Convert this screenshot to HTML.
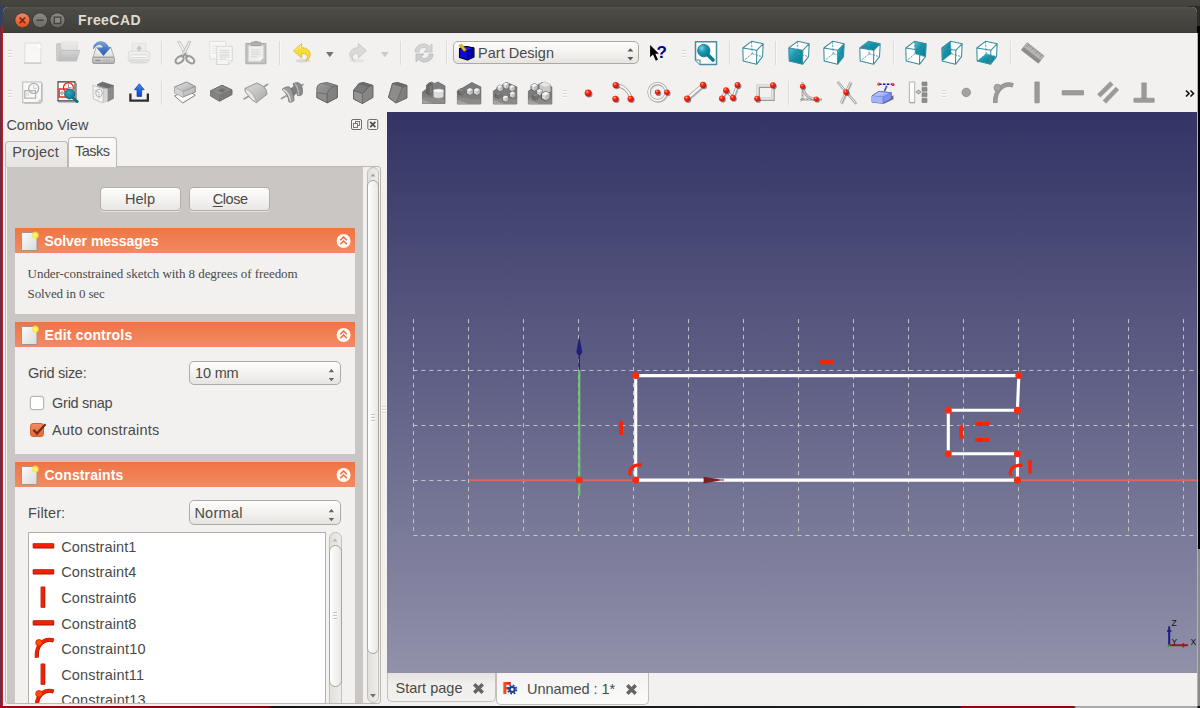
<!DOCTYPE html>
<html><head><meta charset="utf-8"><title>FreeCAD</title>
<style>
*{box-sizing:border-box;margin:0;padding:0}
html,body{width:1200px;height:708px;overflow:hidden;background:#000;font-family:"Liberation Sans",sans-serif;color:#3c3b37}
.abs{position:absolute}
.tx{position:absolute;white-space:pre;line-height:1}
.ic{position:absolute;overflow:visible}
.btn{position:absolute;border:1px solid #b3aea6;border-radius:4px;background:linear-gradient(#fdfdfc,#f4f3f1 50%,#e9e7e4);box-shadow:0 1px 0 rgba(255,255,255,.5)}
.combo{position:absolute;border:1px solid #aea9a1;border-radius:5px;background:linear-gradient(#fdfdfc,#f2f1ef 55%,#e6e4e1)}
.hdr{position:absolute;background:linear-gradient(#ef7443,#f28b65)}
.sep{position:absolute;width:1px;background:#dddbd7;box-shadow:1px 0 0 #f9f8f7}
.hand{position:absolute;width:4px;height:9px;background:repeating-linear-gradient(#d9d7d3 0,#d9d7d3 1px,#fcfcfb 1px,#fcfcfb 2px,transparent 2px,transparent 3px)}
.ul::first-letter{text-decoration:underline;text-underline-offset:2px}
</style></head><body>
<div class="abs" style="left:0px;top:0px;width:1200px;height:708px;background:#000"></div><div class="abs" style="left:0px;top:0px;width:1200px;height:7px;background:linear-gradient(#474640,#42413b)"></div><div class="abs" style="left:0px;top:6px;width:9px;height:30px;background:#384060"></div><div class="abs" style="left:0px;top:6px;width:3px;height:702px;background:linear-gradient(#384060 0,#384060 19px,#6b2c47 20px,#6b2c47 100%)"></div><div class="abs" style="left:2px;top:26px;width:1px;height:682px;background:#b5222c"></div><div class="abs" style="left:1188px;top:6px;width:12px;height:20px;background:#2c2b28"></div><div class="abs" style="left:1197px;top:33px;width:1px;height:673px;background:#b4b2af"></div><div class="abs" style="left:1198px;top:549px;width:2px;height:157px;background:#8b8b8b"></div><div class="abs" style="left:0px;top:706px;width:1200px;height:2px;background:linear-gradient(90deg,#9c0c0c 0,#8a0606 200px,#7a0404 268px,#161616 272px,#1c201e 960px,#8e0a0a 962px,#8e0a0a 1074px,#a9a9a9 1076px,#a9a9a9 1197px,#111 1198px)"></div><div class="abs" style="left:3px;top:7px;width:1194px;height:699px;background:#f2f1f0;border-radius:5px 5px 0 0"></div><div class="abs" style="left:3px;top:7px;width:1194px;height:26px;background:linear-gradient(#57554e 0,#4c4b45 10%,#403f3a 100%);border-radius:5px 5px 0 0;border-bottom:1px solid #3a3934"></div><svg class="ic" style="left:12px;top:10px" width="60" height="21" viewBox="0 0 60 21"><defs><linearGradient id="gwc" x1="0" y1="0" x2="0" y2="1"><stop offset="0" stop-color="#f08763"/><stop offset="1" stop-color="#e24f1b"/></linearGradient><linearGradient id="gwm" x1="0" y1="0" x2="0" y2="1"><stop offset="0" stop-color="#8b8982"/><stop offset="1" stop-color="#6a6862"/></linearGradient></defs><circle cx="10.400" cy="10.300" r="7.800" fill="#35342f"/><circle cx="10.400" cy="10.300" r="7.100" fill="url(#gwc)"/><path d="M7.600 7.500l5.600 5.600M13.200 7.500l-5.600 5.600" stroke="#6a2a12" stroke-width="1.500"/><circle cx="28" cy="10.300" r="7.800" fill="#35342f"/><circle cx="28" cy="10.300" r="7.100" fill="url(#gwm)"/><path d="M24.500 10.300h7" stroke="#43423d" stroke-width="1.500"/><circle cx="45.500" cy="10.300" r="7.800" fill="#35342f"/><circle cx="45.500" cy="10.300" r="7.100" fill="url(#gwm)"/><path d="M42.300 7.100h6.400v6.400h-6.400z" fill="#8a8881" stroke="#43423d" stroke-width="1.300"/></svg><div class="tx" style="left:78px;top:12.75px;font-size:14px;font-weight:bold;color:#dfdbd2;font-family:'Liberation Sans',sans-serif;letter-spacing:0.442px;">FreeCAD</div><svg class="ic" style="left:20.0px;top:41.0px" width="24" height="24" viewBox="0 0 24 24"><defs><linearGradient id="gnew" x1="0" y1="0" x2="1" y2="1"><stop offset="0" stop-color="#f6f6f5"/><stop offset="1" stop-color="#f9f9f8"/></linearGradient><radialGradient id="gnew2"><stop offset="0" stop-color="#fff"/><stop offset=".5" stop-color="#fcfcfc"/><stop offset="1" stop-color="#fcfcfc" stop-opacity="0"/></radialGradient></defs>
<path d="M4.800 1.900h16v20h-16z" fill="url(#gnew)" stroke="#e0dfdd" stroke-width="1"/><path d="M4 22.100h17.600" stroke="#c9c8c6" stroke-width="1.200"/><circle cx="18.800" cy="5.400" r="3" fill="url(#gnew2)"/><circle cx="18.800" cy="5.400" r="3.400" fill="none" stroke="#e4e3e1" stroke-width=".6" opacity=".6"/></svg><svg class="ic" style="left:56.0px;top:41.0px" width="24" height="24" viewBox="0 0 24 24"><defs><linearGradient id="gop" x1="0" y1="0" x2="0" y2="1"><stop offset="0" stop-color="#d4d4d4"/><stop offset="1" stop-color="#bcbcbc"/></linearGradient><linearGradient id="gop2" x1="0" y1="0" x2="0" y2="1"><stop offset="0" stop-color="#f0f0f0"/><stop offset="1" stop-color="#d2d2d2"/></linearGradient></defs>
<path d="M.500 3.500c0-.6.400-1 1-1h4l1.500 2v15h-6.500z" fill="#cbcbcb" stroke="#bdbdbd" stroke-width=".6"/><path d="M5 1.100h16.500v10h-16.500z" fill="url(#gop2)" stroke="#d6d6d6" stroke-width=".6"/><path d="M6.500 2.500l14-.500v8h-14z" fill="#e6e6e6" opacity=".7"/>
<path d="M5.500 9.400h18.300l-3.200 10.100h-18.300z" fill="url(#gop)" stroke="#b6b6b6" stroke-width=".7"/><path d="M1.500 20.300h19" stroke="#c9c9c9" stroke-width=".8"/></svg><svg class="ic" style="left:91.0px;top:41.0px" width="24" height="24" viewBox="0 0 24 24"><defs><linearGradient id="gsv" x1="0" y1="0" x2="0" y2="1"><stop offset="0" stop-color="#f6f6f6"/><stop offset="1" stop-color="#dedede"/></linearGradient><linearGradient id="gsv2" x1="0" y1="0" x2="0" y2="1"><stop offset="0" stop-color="#78a6e0"/><stop offset=".5" stop-color="#467cc4"/><stop offset="1" stop-color="#2a5aa4"/></linearGradient><linearGradient id="gsv3" x1="0" y1="0" x2="0" y2="1"><stop offset="0" stop-color="#d6d6d6"/><stop offset="1" stop-color="#b4b4b4"/></linearGradient></defs>
<path d="M5.200 6.300h14.600l3.200 9.950h-21z" fill="url(#gsv)" stroke="#a8a8a8" stroke-width=".9" stroke-linejoin="round"/><rect x="1.700" y="16.250" width="21.600" height="6.150" rx="1" fill="url(#gsv3)" stroke="#8e8e8e" stroke-width=".9"/><path d="M4.300 19.300h5" stroke="#8f8f8f" stroke-width="1.300"/><path d="M13 17.800v3M15.500 17.800v3M18 17.800v3" stroke="#a6a6a6" stroke-width=".7"/>
<path d="M2.400 7.900C2.600 3.600 5.600 .700 9.400 .700C13.600 .700 16.800 3.200 17.400 6.700L19.600 6.600L12.500 14.600L6.300 7.200L12.300 7C11.900 4.800 10.300 3.600 8.400 3.600C6.200 3.600 4.200 5.200 2.400 7.900Z" fill="url(#gsv2)" stroke="#3467ae" stroke-width=".5" stroke-linejoin="round"/></svg><svg class="ic" style="left:127.0px;top:41.0px" width="24" height="24" viewBox="0 0 24 24"><path d="M5.100 2.250h13.700v9.500h-13.700z" fill="#ececeb" stroke="#dededd" stroke-width=".7"/><path d="M12.100 4.600l3 3.200h-1.800v2.400h-2.400v-2.400h-1.800z" fill="#c4c4c3"/>
<rect x="1.300" y="10.100" width="21.300" height="11.100" rx="2.800" fill="#efefee" stroke="#d6d6d5" stroke-width=".8"/><rect x="3.500" y="13.900" width="17" height="2.600" rx="1.200" fill="#fbfbfb" stroke="#d4d4d3" stroke-width=".8"/><path d="M1.800 18h20.300v.8c0 1.400-.8 2.100-2 2.100h-16.300c-1.200 0-2-.7-2-2.100z" fill="#dfdfde"/><path d="M3.500 21.900h17" stroke="#d6d6d5" stroke-width=".9"/></svg><svg class="ic" style="left:173.0px;top:41.0px" width="24" height="24" viewBox="0 0 24 24"><path d="M4.750 .600h2.400l8.400 15-2.400 1.200z" fill="#f4f4f4" stroke="#b9b9b9" stroke-width=".8" stroke-linejoin="round"/><path d="M17.900 .600h-2.400l-7.200 13.800 2 2.200z" fill="#e9e9e9" stroke="#b2b2b2" stroke-width=".8" stroke-linejoin="round"/>
<ellipse cx="6.600" cy="18.750" rx="4.600" ry="2.900" transform="rotate(-38 6.600 18.750)" fill="none" stroke="#9a9a9a" stroke-width="2.100"/><ellipse cx="17.250" cy="18.750" rx="4.600" ry="2.900" transform="rotate(38 17.250 18.750)" fill="none" stroke="#9a9a9a" stroke-width="2.100"/>
<path d="M9.300 16l2.600-3 2.600 3" fill="none" stroke="#9a9a9a" stroke-width="1.900"/></svg><svg class="ic" style="left:208.5px;top:41.0px" width="24" height="24" viewBox="0 0 24 24"><path d="M.750 .400h16v17.600h-16z" fill="#f7f7f6" stroke="#dddcdb" stroke-width=".9"/><path d="M3 5h6M3 7.300h5M3 9.600h5M3 12h5" stroke="#e4e3e2" stroke-width=".9"/>
<path d="M7.750 5.250h15.500v14.500l-3.800 3.750h-11.700z" fill="#f5f5f4" stroke="#d4d3d2" stroke-width=".9"/><path d="M10.500 9.500h10M10.500 11.700h10M10.500 14h10M10.500 16.200h10M10.500 18.400h7" stroke="#dddcdb" stroke-width="1.300"/><path d="M23.250 19.750h-3.800v3.750z" fill="#fff" stroke="#d0cfce" stroke-width=".7"/></svg><svg class="ic" style="left:244.0px;top:41.0px" width="24" height="24" viewBox="0 0 24 24"><path d="M1.900 2.400h20v20.350h-20z" fill="#c2c2c2" stroke="#aaaaaa" stroke-width="1"/><path d="M4.500 5h15v15.500h-15z" fill="#eeeeed" stroke="#d4d4d3" stroke-width=".7"/>
<path d="M7.500 1.200h9v3.300h-9z" fill="#b0b0b0" stroke="#9c9c9c" stroke-width=".8"/><path d="M9.800 0h4.400v1.800h-4.400z" fill="#a6a6a6"/><path d="M7 9h9M7 11.200h9M7 13.400h9M7 15.600h6" stroke="#dcdcdb" stroke-width="1.200"/><path d="M19.500 16.500v4h-4z" fill="#b9b9b9"/><path d="M19.500 16.500h-4v4z" fill="#fafafa"/></svg><svg class="ic" style="left:289.5px;top:41.0px" width="24" height="24" viewBox="0 0 24 24"><g transform="translate(1.300 .800) scale(.9)"><ellipse cx="13" cy="21" rx="8.500" ry="2" fill="#000" opacity=".10"/>
<path d="M2.500 10l9-8v4.500c6 0 9.500 3.500 9.500 8c0 3-2 5.500-5.500 6.500c2-1.500 2.500-3 2.500-4.500c0-2.500-2.500-3.500-6.500-3.500v5z" fill="#f4dd3c" stroke="#d7b91a" stroke-width=".9" stroke-linejoin="round"/>
<path d="M4 10l6.500-5.800v3.300" fill="none" stroke="#fbf3a8" stroke-width=".9"/></g></svg><svg class="ic" style="left:346.0px;top:41.0px" width="24" height="24" viewBox="0 0 24 24"><g transform="translate(1.100 .800) scale(.9)"><ellipse cx="11" cy="21" rx="8.500" ry="2" fill="#000" opacity=".05"/>
<path d="M21.500 10l-9-8v4.500c-6 0-9.500 3.500-9.500 8c0 3 2 5.500 5.500 6.500c-2-1.500-2.500-3-2.500-4.500c0-2.500 2.500-3.500 6.500-3.500v5z" fill="#d9d9d9" stroke="#c6c6c6" stroke-width=".9" stroke-linejoin="round"/></g></svg><svg class="ic" style="left:412.0px;top:41.0px" width="24" height="24" viewBox="0 0 24 24"><path d="M3 11c0-5 4-8 8.500-8c2.500 0 4.500 1 6 2.500l2.500-2.500v8h-8l3-3c-1-1-2.200-1.500-3.500-1.500c-2.800 0-4.500 2-4.500 4.500z" fill="#d4d4d4" stroke="#bfbfbf" stroke-width=".8"/>
<path d="M21 13c0 5-4 8-8.500 8c-2.500 0-4.500-1-6-2.500l-2.500 2.500v-8h8l-3 3c1 1 2.200 1.500 3.500 1.500c2.800 0 4.500-2 4.500-4.500z" fill="#cdcdcd" stroke="#b9b9b9" stroke-width=".8"/></svg><svg class="ic" style="left:646.0px;top:41.0px" width="24" height="24" viewBox="0 0 24 24"><path d="M4.100 4L4.100 16.200 7 13.400 9.800 19.700 12 18.700 9.300 12.700 12.900 12.700z" fill="#000"/><text x="10.600" y="17.100" font-family="Liberation Sans,sans-serif" font-weight="bold" font-size="17" fill="#00008b">?</text></svg><svg class="ic" style="left:694.0px;top:41.0px" width="24" height="24" viewBox="0 0 24 24"><path d="M1.500 .800h21v22.700h-16.500l-4.500-4.500z" fill="#fdfefe" stroke="#4a8c9a" stroke-width="1.500" stroke-linejoin="round"/><path d="M1.500 19h4.500v4.500" fill="#fff" stroke="#4a8c9a" stroke-width="1.100"/>
<defs><radialGradient id="gzf" cx=".33" cy=".3" r=".75"><stop offset="0" stop-color="#74d4f2"/><stop offset=".45" stop-color="#1a9ab2"/><stop offset="1" stop-color="#077c92"/></radialGradient></defs>
<path d="M14 14l5 5" stroke="#0b7c90" stroke-width="3.700" stroke-linecap="round"/><circle cx="9.800" cy="9.600" r="6.200" fill="url(#gzf)" stroke="#0d7084" stroke-width=".8"/></svg><svg class="ic" style="left:740.5px;top:41.0px" width="24" height="24" viewBox="0 0 24 24"><defs><linearGradient id="gcube" x1="0" y1="0" x2="1" y2="1"><stop offset="0" stop-color="#5cc4e2"/><stop offset=".45" stop-color="#1292aa"/><stop offset="1" stop-color="#078198"/></linearGradient></defs><path d="M1.8 7L10.5 0.3L22.2 2.7L21.5 15.7L15.5 23.3L2.2 20z" fill="#fff"/><path d="M10.5 0.3L11.2 12.7M11.2 12.7L2.2 20M11.2 12.7L21.5 15.7" fill="none" stroke="#4a96a5" stroke-width=".9" stroke-dasharray="2.400 1.100"/><path d="M1.8 7L15.8 9.3L15.5 23.3L2.2 20zM1.8 7L10.5 0.3L22.2 2.7L15.8 9.3M22.2 2.7L21.5 15.7L15.5 23.3" fill="none" stroke="#3a8c9c" stroke-width="1.050" stroke-linejoin="round"/></svg><svg class="ic" style="left:786.5px;top:41.0px" width="24" height="24" viewBox="0 0 24 24"><defs><linearGradient id="gcube" x1="0" y1="0" x2="1" y2="1"><stop offset="0" stop-color="#5cc4e2"/><stop offset=".45" stop-color="#1292aa"/><stop offset="1" stop-color="#078198"/></linearGradient></defs><path d="M1.8 7L10.5 0.3L22.2 2.7L21.5 15.7L15.5 23.3L2.2 20z" fill="#fff"/><path d="M1.8 7L15.8 9.3L15.5 23.3L2.2 20z" fill="url(#gcube)"/><path d="M10.5 0.3L11.2 12.7M11.2 12.7L2.2 20M11.2 12.7L21.5 15.7" fill="none" stroke="#4a96a5" stroke-width=".9" stroke-dasharray="2.400 1.100"/><path d="M1.8 7L15.8 9.3L15.5 23.3L2.2 20zM1.8 7L10.5 0.3L22.2 2.7L15.8 9.3M22.2 2.7L21.5 15.7L15.5 23.3" fill="none" stroke="#3a8c9c" stroke-width="1.050" stroke-linejoin="round"/></svg><svg class="ic" style="left:822.0px;top:41.0px" width="24" height="24" viewBox="0 0 24 24"><defs><linearGradient id="gcube" x1="0" y1="0" x2="1" y2="1"><stop offset="0" stop-color="#5cc4e2"/><stop offset=".45" stop-color="#1292aa"/><stop offset="1" stop-color="#078198"/></linearGradient></defs><path d="M1.8 7L10.5 0.3L22.2 2.7L21.5 15.7L15.5 23.3L2.2 20z" fill="#fff"/><path d="M15.8 9.3L22.2 2.7L21.5 15.7L15.5 23.3z" fill="url(#gcube)"/><path d="M10.5 0.3L11.2 12.7M11.2 12.7L2.2 20M11.2 12.7L21.5 15.7" fill="none" stroke="#4a96a5" stroke-width=".9" stroke-dasharray="2.400 1.100"/><path d="M1.8 7L15.8 9.3L15.5 23.3L2.2 20zM1.8 7L10.5 0.3L22.2 2.7L15.8 9.3M22.2 2.7L21.5 15.7L15.5 23.3" fill="none" stroke="#3a8c9c" stroke-width="1.050" stroke-linejoin="round"/></svg><svg class="ic" style="left:857.5px;top:41.0px" width="24" height="24" viewBox="0 0 24 24"><defs><linearGradient id="gcube" x1="0" y1="0" x2="1" y2="1"><stop offset="0" stop-color="#5cc4e2"/><stop offset=".45" stop-color="#1292aa"/><stop offset="1" stop-color="#078198"/></linearGradient></defs><path d="M1.8 7L10.5 0.3L22.2 2.7L21.5 15.7L15.5 23.3L2.2 20z" fill="#fff"/><path d="M1.8 7L10.5 0.3L22.2 2.7L15.8 9.3z" fill="url(#gcube)"/><path d="M10.5 0.3L11.2 12.7M11.2 12.7L2.2 20M11.2 12.7L21.5 15.7" fill="none" stroke="#4a96a5" stroke-width=".9" stroke-dasharray="2.400 1.100"/><path d="M1.8 7L15.8 9.3L15.5 23.3L2.2 20zM1.8 7L10.5 0.3L22.2 2.7L15.8 9.3M22.2 2.7L21.5 15.7L15.5 23.3" fill="none" stroke="#3a8c9c" stroke-width="1.050" stroke-linejoin="round"/></svg><svg class="ic" style="left:903.5px;top:41.0px" width="24" height="24" viewBox="0 0 24 24"><defs><linearGradient id="gcube" x1="0" y1="0" x2="1" y2="1"><stop offset="0" stop-color="#5cc4e2"/><stop offset=".45" stop-color="#1292aa"/><stop offset="1" stop-color="#078198"/></linearGradient></defs><path d="M1.8 7L10.5 0.3L22.2 2.7L21.5 15.7L15.5 23.3L2.2 20z" fill="#fff"/><path d="M10.5 0.3L22.2 2.7L21.5 15.7L11.2 12.7z" fill="url(#gcube)"/><path d="M10.5 0.3L11.2 12.7M11.2 12.7L2.2 20M11.2 12.7L21.5 15.7" fill="none" stroke="#4a96a5" stroke-width=".9" stroke-dasharray="2.400 1.100"/><path d="M1.8 7L15.8 9.3L15.5 23.3L2.2 20zM1.8 7L10.5 0.3L22.2 2.7L15.8 9.3M22.2 2.7L21.5 15.7L15.5 23.3" fill="none" stroke="#3a8c9c" stroke-width="1.050" stroke-linejoin="round"/></svg><svg class="ic" style="left:939.5px;top:41.0px" width="24" height="24" viewBox="0 0 24 24"><defs><linearGradient id="gcube" x1="0" y1="0" x2="1" y2="1"><stop offset="0" stop-color="#5cc4e2"/><stop offset=".45" stop-color="#1292aa"/><stop offset="1" stop-color="#078198"/></linearGradient></defs><path d="M1.8 7L10.5 0.3L22.2 2.7L21.5 15.7L15.5 23.3L2.2 20z" fill="#fff"/><path d="M1.8 7L10.5 0.3L11.2 12.7L2.2 20z" fill="url(#gcube)"/><path d="M10.5 0.3L11.2 12.7M11.2 12.7L2.2 20M11.2 12.7L21.5 15.7" fill="none" stroke="#4a96a5" stroke-width=".9" stroke-dasharray="2.400 1.100"/><path d="M1.8 7L15.8 9.3L15.5 23.3L2.2 20zM1.8 7L10.5 0.3L22.2 2.7L15.8 9.3M22.2 2.7L21.5 15.7L15.5 23.3" fill="none" stroke="#3a8c9c" stroke-width="1.050" stroke-linejoin="round"/></svg><svg class="ic" style="left:974.5px;top:41.0px" width="24" height="24" viewBox="0 0 24 24"><defs><linearGradient id="gcube" x1="0" y1="0" x2="1" y2="1"><stop offset="0" stop-color="#5cc4e2"/><stop offset=".45" stop-color="#1292aa"/><stop offset="1" stop-color="#078198"/></linearGradient></defs><path d="M1.8 7L10.5 0.3L22.2 2.7L21.5 15.7L15.5 23.3L2.2 20z" fill="#fff"/><path d="M2.2 20L11.2 12.7L21.5 15.7L15.5 23.3z" fill="url(#gcube)"/><path d="M10.5 0.3L11.2 12.7M11.2 12.7L2.2 20M11.2 12.7L21.5 15.7" fill="none" stroke="#4a96a5" stroke-width=".9" stroke-dasharray="2.400 1.100"/><path d="M1.8 7L15.8 9.3L15.5 23.3L2.2 20zM1.8 7L10.5 0.3L22.2 2.7L15.8 9.3M22.2 2.7L21.5 15.7L15.5 23.3" fill="none" stroke="#3a8c9c" stroke-width="1.050" stroke-linejoin="round"/></svg><svg class="ic" style="left:1021.0px;top:41.0px" width="24" height="24" viewBox="0 0 24 24"><g transform="rotate(38 12 12)"><path d="M1 7.500h21.500v6h-21.500z" fill="#b4b4b4" stroke="#9a9a9a" stroke-width=".8"/><path d="M1 13.500h21.500v3.300h-21.500z" fill="#8c8c8c" stroke="#858585" stroke-width=".6"/><path d="M3.500 7.500v3M6.200 7.500v2M9 7.500v3M11.700 7.500v2M14.500 7.500v3M17.200 7.500v2M20 7.500v3" stroke="#858585" stroke-width=".9"/></g></svg><svg class="ic" style="left:20.0px;top:81.0px" width="24" height="24" viewBox="0 0 24 24"><path d="M4.200 2.500h18.800v17.800l-2.500 2.700h-16.300z" fill="#bcbcbc" opacity=".75"/><path d="M2.700 1h18.800v18.100l-2.500 2.500h-16.300z" fill="#f8f8f8" stroke="#bdbdbd" stroke-width="1.100"/><path d="M19 21.600v-2.500h2.500" fill="none" stroke="#bdbdbd" stroke-width=".8"/>
<circle cx="13.700" cy="7.400" r="5" fill="none" stroke="#adadad" stroke-width="1.250"/><path d="M4.800 9.700h10.800v7.300h-10.800z" fill="none" stroke="#b4b4b4" stroke-width="1.250"/><path d="M13.700 4v3.400h3.300" fill="none" stroke="#c2c2c2" stroke-width=".8"/><circle cx="7.500" cy="13.300" r="1.300" fill="none" stroke="#c4c4c4" stroke-width=".7"/></svg><svg class="ic" style="left:56.0px;top:81.0px" width="24" height="24" viewBox="0 0 24 24"><path d="M2 .900h17v19h-17z" fill="#fff" stroke="#3a3a3a" stroke-width="1.100"/><path d="M2.500 21h17.800v-19" fill="none" stroke="#8a8a8a" stroke-width="1"/>
<circle cx="12.400" cy="6.750" r="5" fill="none" stroke="#ee2a1a" stroke-width="1.300"/><path d="M3.200 8h8.500v8h-8.500z" fill="none" stroke="#ee2a1a" stroke-width="1.300"/><path d="M12.400 3.200v3.500h3" fill="none" stroke="#555" stroke-width=".7"/><circle cx="6" cy="12" r="1.300" fill="none" stroke="#555" stroke-width=".7"/>
<defs><radialGradient id="gvs" cx=".4" cy=".35" r=".7"><stop offset="0" stop-color="#35a8bd"/><stop offset="1" stop-color="#087388"/></radialGradient></defs>
<path d="M17 17l4.300 3.600" stroke="#0d7488" stroke-width="2.800" stroke-linecap="round"/><circle cx="13.600" cy="13" r="5" fill="url(#gvs)" stroke="#0a6678" stroke-width=".8"/></svg><svg class="ic" style="left:91.0px;top:81.0px" width="24" height="24" viewBox="0 0 24 24"><path d="M6 3.700L16.600 7.400V20.700L6 17z" fill="#9c9c9c"/><path d="M16.600 7.400L22.500 4.600V17.500L16.600 20.700z" fill="#8a8a8a" stroke="#7a7a7a" stroke-width=".6"/><path d="M6 3.700L11.500 1 22.500 4.600 16.600 7.400z" fill="#6e6e6e" stroke="#666" stroke-width=".6"/>
<path d="M12.400 7.800l4.200-.4v13.300l-4.600 1.300z" fill="#d4d4d4"/>
<path d="M1.900 4.200l10.500 3.600-.4 14.200-9.600-4.100z" fill="#f5f5f5" stroke="#bebebe" stroke-width=".9" stroke-linejoin="round"/><ellipse cx="8" cy="12" rx="3.300" ry="3.900" fill="none" stroke="#b0b0b0" stroke-width="1"/><path d="M3.500 9.500l4.500 1.600v7" fill="none" stroke="#bcbcbc" stroke-width=".9"/></svg><svg class="ic" style="left:127.0px;top:81.0px" width="24" height="24" viewBox="0 0 24 24"><path d="M3.400 12.400v7.200h17.450v-7.200" fill="none" stroke="#2e2e2e" stroke-width="2.300" stroke-linejoin="miter"/>
<defs><linearGradient id="gls" x1="0" y1="0" x2="0" y2="1"><stop offset="0" stop-color="#3a86f4"/><stop offset="1" stop-color="#0a49c8"/></linearGradient></defs>
<path d="M12.300 2.800l4.900 5.900h-2.600v6.800h-4.600v-6.800h-2.600z" fill="url(#gls)" stroke="#0d3ea6" stroke-width=".7" stroke-linejoin="round"/></svg><svg class="ic" style="left:173.0px;top:81.0px" width="24" height="24" viewBox="0 0 24 24"><path d="M1.600 14.900L9.750 22 22.250 14.250 14 9z" fill="#fdfdfd" stroke="#7d7d7d" stroke-width="1"/>
<defs><linearGradient id="gpad" x1="0" y1="0" x2="1" y2="1"><stop offset="0" stop-color="#e4e4e4"/><stop offset="1" stop-color="#aaaaaa"/></linearGradient></defs>
<path d="M1.600 6.100L13.500 1.100 22.250 5.500v5.600L9.750 16.100 1.600 11.700z" fill="#c2c2c2" stroke="#858585" stroke-width=".9" stroke-linejoin="round"/><path d="M1.600 6.100L13.500 1.100 22.250 5.500 9.750 10.500z" fill="url(#gpad)" stroke="#8a8a8a" stroke-width=".7"/><path d="M9.750 10.500v5.600" stroke="#8a8a8a" stroke-width=".8"/><path d="M1.600 6.100l8.150 4.400v5.600l-8.150-4.400z" fill="#d2d2d2"/></svg><svg class="ic" style="left:208.5px;top:81.0px" width="24" height="24" viewBox="0 0 24 24"><path d="M1.500 9.900L13 4.250 23 9v4.600L10.500 20.250 1.500 14.900z" fill="#7b7b7b" stroke="#646464" stroke-width=".9" stroke-linejoin="round"/><path d="M1.500 9.900L13 4.250 23 9 10.500 14.500z" fill="#8b8b8b" stroke="#686868" stroke-width=".7"/><path d="M10.500 14.500v5.750" stroke="#646464" stroke-width=".8"/><path d="M1.500 9.900l9 4.600v5.750l-9-5.350z" fill="#848484"/>
<path d="M8.500 9.300l4.500-2.300 4.500 2-4.500 2.400z" fill="#757575"/><path d="M10.500 9.300l4.800.2-2.300 1.600z" fill="#686868"/></svg><svg class="ic" style="left:244.0px;top:81.0px" width="24" height="24" viewBox="0 0 24 24"><path d="M.300 17.800L5.600 14.700" stroke="#9c9c9c" stroke-width="1.900" stroke-linecap="round"/><path d="M20.300 5.500L23.400 3.500" stroke="#9c9c9c" stroke-width="1.900" stroke-linecap="round"/>
<defs><linearGradient id="grev" x1="0" y1="0" x2="1" y2="1"><stop offset="0" stop-color="#dcdcdc"/><stop offset=".5" stop-color="#c4c4c4"/><stop offset="1" stop-color="#a4a4a4"/></linearGradient></defs>
<path d="M1 7.400L13 1.900 18.900 5.100C21.500 7 22.800 10 23 13.300L12.500 21.600 7.500 18.400 1.500 11z" fill="url(#grev)" stroke="#8c8c8c" stroke-width=".9" stroke-linejoin="round"/>
<path d="M1 7.400C6 8.800 11.100 14.700 12.500 21.600L7.500 18.400 1.500 11z" fill="#e6e6e6" stroke="#9a9a9a" stroke-width=".8" stroke-linejoin="round"/></svg><svg class="ic" style="left:279.5px;top:81.0px" width="24" height="24" viewBox="0 0 24 24"><path d="M1.500 17.500L6 15" stroke="#9a9a9a" stroke-width="1.700" stroke-linecap="round"/><path d="M19.500 5.500L23 3.500" stroke="#9a9a9a" stroke-width="1.700" stroke-linecap="round"/>
<path d="M13 3c2.500-2 5.500-1.500 7.500 0c2 3 2.500 7 1.500 10.500c-1.500 1-3 1.500-4.500 1c-1-3.500-2-7-4.500-11.500z" fill="#8a8a8a" stroke="#6f6f6f" stroke-width=".8"/><path d="M15 2.500c2 2.500 3.500 7 3.500 11.500" fill="none" stroke="#bdbdbd" stroke-width="1.200"/>
<path d="M9 9.500c2-2.500 4-4.500 6-5c1 2.500 1.500 5 1.500 8c-2 1.500-3.500 3.500-4.500 6z" fill="#7f7f7f"/>
<path d="M2 8.500c2-2 5-3 7.500-2.500c3 3.500 4.500 8.500 4.500 13.500c-1.500 1.500-3.500 2-5 1.500c-.5-5-3-9.500-7-12.500z" fill="#9c9c9c" stroke="#6f6f6f" stroke-width=".8"/><path d="M3 8.500c4 2 7 7 7.500 12" fill="none" stroke="#d9d9d9" stroke-width="1.400"/></svg><svg class="ic" style="left:315.0px;top:81.0px" width="24" height="24" viewBox="0 0 24 24"><defs><linearGradient id="gfil" x1="0" y1="0" x2="1" y2="1"><stop offset="0" stop-color="#9a9a9a"/><stop offset="1" stop-color="#787878"/></linearGradient></defs>
<path d="M1.900 6.900C2.500 3.500 5 2.500 7.600 2.300L11.700 1.400 22.250 4.600V16.600L12.200 21.800 1.900 16.600z" fill="url(#gfil)" stroke="#606060" stroke-width=".9" stroke-linejoin="round"/>
<path d="M1.900 11.500l10.300 1.800v8.500L1.900 16.600z" fill="#8e8e8e" stroke="#606060" stroke-width=".7"/><path d="M12.200 13.300C13 8 17 5.500 22.250 4.600V16.600L12.200 21.800z" fill="#818181" stroke="#606060" stroke-width=".7"/><path d="M7.600 2.300L18 5.600" stroke="#6a6a6a" stroke-width=".7"/><path d="M1.900 11.500C2.500 7 5 4 9 2.800" fill="none" stroke="#a8a8a8" stroke-width=".6" opacity=".6"/></svg><svg class="ic" style="left:350.5px;top:81.0px" width="24" height="24" viewBox="0 0 24 24"><path d="M2.500 9.500L8 2.500l4.500-1 9.500 3v12L11.500 22.500 2.500 18z" fill="#858585" stroke="#5f5f5f" stroke-width=".9" stroke-linejoin="round"/>
<path d="M2.500 9.500L8 2.500l10 3-6.500 7z" fill="#7a7a7a" stroke="#5f5f5f" stroke-width=".7"/><path d="M8 2.500l4.500-1 9.500 3-4 1z" fill="#6f6f6f" stroke="#5f5f5f" stroke-width=".6"/><path d="M2.500 9.500l9 3v10l-9-4.500z" fill="#939393" stroke="#5f5f5f" stroke-width=".7"/><path d="M11.500 12.500L18 5.500" stroke="#5f5f5f" stroke-width=".8"/></svg><svg class="ic" style="left:386.0px;top:81.0px" width="24" height="24" viewBox="0 0 24 24"><path d="M2.500 16.500L6.500 2.500l5-1 9.500 3v12.500L10 22z" fill="#7f7f7f" stroke="#5f5f5f" stroke-width=".9" stroke-linejoin="round"/>
<path d="M6.500 2.500l5-1 9.500 3-4.500 1.500z" fill="#6d6d6d" stroke="#5f5f5f" stroke-width=".6"/><path d="M2.500 16.500L6.500 2.500l10 3.500L10 22z" fill="#8c8c8c" stroke="#5f5f5f" stroke-width=".7"/></svg><svg class="ic" style="left:421.5px;top:81.0px" width="24" height="24" viewBox="0 0 24 24"><g transform="translate(-1 0)"><path d="M1.500 11l6-4.500v-4l3-1.500 3 1.500L17 1l7 4v17.500h-22.500z" fill="#7e7e7e" stroke="#686868" stroke-width=".8" stroke-linejoin="round"/>
<path d="M1.500 11l6-3 7 4-5 4z" fill="#747474"/><path d="M1.500 16l22 2v4.500h-22z" fill="#8c8c8c"/><path d="M1.500 18.500l10 4h-10z" fill="#a2a2a2"/>
<path d="M5.500 4l3-2 3 1.500v8l-3 2-3-1.500z" fill="#666" stroke="#555" stroke-width=".6"/><path d="M8.500 5.500l3-2v8l-3 2z" fill="#777"/>
<path d="M12.500 10c0-2.200 10-2.200 10 0v5.500c0 2.200-10 2.200-10 0z" fill="#dcdcdc" stroke="#a5a5a5" stroke-width=".6"/><ellipse cx="17.500" cy="10" rx="5" ry="1.900" fill="#f7f7f7" stroke="#c2c2c2" stroke-width=".5"/></g></svg><svg class="ic" style="left:457.0px;top:81.0px" width="24" height="24" viewBox="0 0 24 24"><path d="M.400 10.100L14.8 1.600l9 4.300V23H.400z" fill="#7c7c7c" stroke="#676767" stroke-width=".8" stroke-linejoin="round"/><path d="M.400 16.500l23.400 2V23H.400z" fill="#8a8a8a"/><path d="M.400 18.800l11 4.200h-11z" fill="#a2a2a2"/><g transform="translate(1.0 7.5) scale(1.0)"><path d="M0 1.800L3 0l3 1.300v3.700L3 6.800 0 5.300z" fill="#6c6c6c" stroke="#5c5c5c" stroke-width=".8" stroke-linejoin="round"/><path d="M0 1.800L3 0l3 1.300L3 3.100z" fill="#8a8a8a"/><path d="M3 3.100l3-1.800v3.700L3 6.800z" fill="#777"/></g><g transform="translate(9.5 7) scale(1.05)"><path d="M0 1.800L3 0l3 1.300v3.700L3 6.800 0 5.300z" fill="#d6d6d6" stroke="#5c5c5c" stroke-width=".8" stroke-linejoin="round"/><path d="M0 1.800L3 0l3 1.300L3 3.100z" fill="#f2f2f2"/><path d="M3 3.100l3-1.800v3.700L3 6.800z" fill="#bdbdbd"/></g><g transform="translate(16.5 7) scale(1.05)"><path d="M0 1.800L3 0l3 1.300v3.700L3 6.800 0 5.300z" fill="#d6d6d6" stroke="#5c5c5c" stroke-width=".8" stroke-linejoin="round"/><path d="M0 1.800L3 0l3 1.300L3 3.100z" fill="#f2f2f2"/><path d="M3 3.100l3-1.800v3.700L3 6.800z" fill="#bdbdbd"/></g></svg><svg class="ic" style="left:492.5px;top:81.0px" width="24" height="24" viewBox="0 0 24 24"><path d="M.400 10.100L13.8 1.600l10 4.300V23H.400z" fill="#7c7c7c" stroke="#676767" stroke-width=".8" stroke-linejoin="round"/><path d="M.400 16.500l23.400 2V23H.400z" fill="#8a8a8a"/><path d="M.400 18.800l11 4.200h-11z" fill="#a2a2a2"/><g transform="translate(4.0 4) scale(0.95)"><path d="M0 1.800L3 0l3 1.300v3.700L3 6.800 0 5.300z" fill="#d6d6d6" stroke="#5c5c5c" stroke-width=".8" stroke-linejoin="round"/><path d="M0 1.800L3 0l3 1.300L3 3.100z" fill="#f2f2f2"/><path d="M3 3.100l3-1.800v3.700L3 6.800z" fill="#bdbdbd"/></g><g transform="translate(10.0 1.5) scale(0.95)"><path d="M0 1.800L3 0l3 1.300v3.700L3 6.800 0 5.300z" fill="#d6d6d6" stroke="#5c5c5c" stroke-width=".8" stroke-linejoin="round"/><path d="M0 1.800L3 0l3 1.300L3 3.100z" fill="#f2f2f2"/><path d="M3 3.100l3-1.800v3.700L3 6.800z" fill="#bdbdbd"/></g><g transform="translate(16.0 4) scale(0.95)"><path d="M0 1.800L3 0l3 1.300v3.700L3 6.800 0 5.300z" fill="#d6d6d6" stroke="#5c5c5c" stroke-width=".8" stroke-linejoin="round"/><path d="M0 1.800L3 0l3 1.300L3 3.100z" fill="#f2f2f2"/><path d="M3 3.100l3-1.800v3.700L3 6.800z" fill="#bdbdbd"/></g><g transform="translate(2.5 11) scale(0.95)"><path d="M0 1.800L3 0l3 1.300v3.700L3 6.800 0 5.300z" fill="#6c6c6c" stroke="#5c5c5c" stroke-width=".8" stroke-linejoin="round"/><path d="M0 1.800L3 0l3 1.300L3 3.100z" fill="#8a8a8a"/><path d="M3 3.100l3-1.800v3.700L3 6.800z" fill="#777"/></g><g transform="translate(16.5 10.5) scale(0.95)"><path d="M0 1.800L3 0l3 1.300v3.700L3 6.800 0 5.300z" fill="#d6d6d6" stroke="#5c5c5c" stroke-width=".8" stroke-linejoin="round"/><path d="M0 1.800L3 0l3 1.300L3 3.100z" fill="#f2f2f2"/><path d="M3 3.100l3-1.800v3.700L3 6.800z" fill="#bdbdbd"/></g><g transform="translate(9.5 14.5) scale(0.95)"><path d="M0 1.800L3 0l3 1.300v3.700L3 6.800 0 5.300z" fill="#d6d6d6" stroke="#5c5c5c" stroke-width=".8" stroke-linejoin="round"/><path d="M0 1.800L3 0l3 1.300L3 3.100z" fill="#f2f2f2"/><path d="M3 3.100l3-1.800v3.700L3 6.800z" fill="#bdbdbd"/></g></svg><svg class="ic" style="left:528.0px;top:81.0px" width="24" height="24" viewBox="0 0 24 24"><path d="M.400 10.100L13.8 1.600l10 4.300V23H.400z" fill="#7c7c7c" stroke="#676767" stroke-width=".8" stroke-linejoin="round"/><path d="M.400 16.500l23.400 2V23H.400z" fill="#8a8a8a"/><path d="M.400 18.800l11 4.200h-11z" fill="#a2a2a2"/><path d="M11.500 3.500l5-2.500 6 2.500v7l-5 3-6-2.500z" fill="#c9c9c9" stroke="#9c9c9c" stroke-width=".6"/><path d="M11.500 3.500l5-2.500 6 2.500-5 2.500z" fill="#e6e6e6"/><g transform="translate(3.0 2.5) scale(1.1)"><path d="M0 1.800L3 0l3 1.300v3.700L3 6.800 0 5.300z" fill="#d6d6d6" stroke="#5c5c5c" stroke-width=".8" stroke-linejoin="round"/><path d="M0 1.800L3 0l3 1.300L3 3.100z" fill="#f2f2f2"/><path d="M3 3.100l3-1.800v3.700L3 6.800z" fill="#bdbdbd"/></g><g transform="translate(8.5 8) scale(1.0)"><path d="M0 1.800L3 0l3 1.300v3.700L3 6.800 0 5.300z" fill="#d6d6d6" stroke="#5c5c5c" stroke-width=".8" stroke-linejoin="round"/><path d="M0 1.800L3 0l3 1.300L3 3.100z" fill="#f2f2f2"/><path d="M3 3.100l3-1.800v3.700L3 6.800z" fill="#bdbdbd"/></g><g transform="translate(13.5 10.5) scale(1.35)"><path d="M0 1.800L3 0l3 1.300v3.700L3 6.800 0 5.300z" fill="#d6d6d6" stroke="#5c5c5c" stroke-width=".8" stroke-linejoin="round"/><path d="M0 1.800L3 0l3 1.300L3 3.100z" fill="#f2f2f2"/><path d="M3 3.100l3-1.800v3.700L3 6.800z" fill="#bdbdbd"/></g><g transform="translate(4.5 12.5) scale(1.0)"><path d="M0 1.800L3 0l3 1.300v3.700L3 6.800 0 5.300z" fill="#6c6c6c" stroke="#5c5c5c" stroke-width=".8" stroke-linejoin="round"/><path d="M0 1.800L3 0l3 1.300L3 3.100z" fill="#8a8a8a"/><path d="M3 3.100l3-1.800v3.700L3 6.800z" fill="#777"/></g></svg><svg class="ic" style="left:576.0px;top:81.0px" width="24" height="24" viewBox="0 0 24 24"><defs><radialGradient id="gball" cx=".38" cy=".32" r=".75"><stop offset="0" stop-color="#ffc4b8"/><stop offset=".3" stop-color="#ff2e16"/><stop offset="1" stop-color="#c80800"/></radialGradient></defs><circle cx="13.20" cy="13.30" r="3.30" fill="#4a4a4a" opacity=".6"/><circle cx="12.10" cy="12.00" r="3.40" fill="url(#gball)"/></svg><svg class="ic" style="left:611.0px;top:81.0px" width="24" height="24" viewBox="0 0 24 24"><defs><radialGradient id="gball" cx=".38" cy=".32" r=".75"><stop offset="0" stop-color="#ffc4b8"/><stop offset=".3" stop-color="#ff2e16"/><stop offset="1" stop-color="#c80800"/></radialGradient></defs><path d="M4.600 4C12 4.500 18.500 10 19.600 17.750" fill="none" stroke="#666" stroke-width="3.0" opacity=".45" transform="translate(.9 1.100)"/><path d="M4.600 4C12 4.500 18.500 10 19.600 17.750" fill="none" stroke="#a2a2a2" stroke-width="3.4"/><path d="M4.600 4C12 4.500 18.500 10 19.600 17.750" fill="none" stroke="#f6f6f6" stroke-width="1.9"/><circle cx="5.70" cy="5.30" r="3.00" fill="#4a4a4a" opacity=".6"/><circle cx="4.60" cy="4.00" r="3.10" fill="url(#gball)"/><circle cx="5.50" cy="19.05" r="3.00" fill="#4a4a4a" opacity=".6"/><circle cx="4.40" cy="17.75" r="3.10" fill="url(#gball)"/><circle cx="20.70" cy="19.05" r="3.00" fill="#4a4a4a" opacity=".6"/><circle cx="19.60" cy="17.75" r="3.10" fill="url(#gball)"/></svg><svg class="ic" style="left:647.0px;top:81.0px" width="24" height="24" viewBox="0 0 24 24"><defs><radialGradient id="gball" cx=".38" cy=".32" r=".75"><stop offset="0" stop-color="#ffc4b8"/><stop offset=".3" stop-color="#ff2e16"/><stop offset="1" stop-color="#c80800"/></radialGradient></defs><circle cx="11.200" cy="12" r="8.600" fill="none" stroke="#666" stroke-width="2.600" opacity=".4"/><circle cx="10.500" cy="11.100" r="8.600" fill="none" stroke="#a2a2a2" stroke-width="3.200"/><circle cx="10.500" cy="11.100" r="8.600" fill="none" stroke="#f8f8f8" stroke-width="1.700"/><circle cx="11.60" cy="12.40" r="2.60" fill="#4a4a4a" opacity=".6"/><circle cx="10.50" cy="11.10" r="2.70" fill="url(#gball)"/><circle cx="21.00" cy="12.60" r="2.60" fill="#4a4a4a" opacity=".6"/><circle cx="19.90" cy="11.30" r="2.70" fill="url(#gball)"/></svg><svg class="ic" style="left:682.5px;top:81.0px" width="24" height="24" viewBox="0 0 24 24"><defs><radialGradient id="gball" cx=".38" cy=".32" r=".75"><stop offset="0" stop-color="#ffc4b8"/><stop offset=".3" stop-color="#ff2e16"/><stop offset="1" stop-color="#c80800"/></radialGradient></defs><path d="M4.100 17.600L20 3.900" fill="none" stroke="#666" stroke-width="3.4" opacity=".45" transform="translate(.9 1.100)"/><path d="M4.100 17.600L20 3.900" fill="none" stroke="#a2a2a2" stroke-width="3.8"/><path d="M4.100 17.600L20 3.900" fill="none" stroke="#f6f6f6" stroke-width="2.3"/><circle cx="5.20" cy="18.90" r="3.00" fill="#4a4a4a" opacity=".6"/><circle cx="4.10" cy="17.60" r="3.10" fill="url(#gball)"/><circle cx="21.10" cy="5.20" r="3.00" fill="#4a4a4a" opacity=".6"/><circle cx="20.00" cy="3.90" r="3.10" fill="url(#gball)"/></svg><svg class="ic" style="left:718.0px;top:81.0px" width="24" height="24" viewBox="0 0 24 24"><defs><radialGradient id="gball" cx=".38" cy=".32" r=".75"><stop offset="0" stop-color="#ffc4b8"/><stop offset=".3" stop-color="#ff2e16"/><stop offset="1" stop-color="#c80800"/></radialGradient></defs><path d="M3.900 17.400L8 9.250L14.900 16.750L19.500 3.900" fill="none" stroke="#666" stroke-width="2.6" opacity=".45" transform="translate(.9 1.100)"/><path d="M3.900 17.400L8 9.250L14.900 16.750L19.500 3.900" fill="none" stroke="#a2a2a2" stroke-width="3"/><path d="M3.900 17.400L8 9.250L14.900 16.750L19.500 3.900" fill="none" stroke="#f6f6f6" stroke-width="1.5"/><circle cx="5.00" cy="18.70" r="2.80" fill="#4a4a4a" opacity=".6"/><circle cx="3.90" cy="17.40" r="2.90" fill="url(#gball)"/><circle cx="9.10" cy="10.55" r="2.80" fill="#4a4a4a" opacity=".6"/><circle cx="8.00" cy="9.25" r="2.90" fill="url(#gball)"/><circle cx="16.00" cy="18.05" r="2.80" fill="#4a4a4a" opacity=".6"/><circle cx="14.90" cy="16.75" r="2.90" fill="url(#gball)"/><circle cx="20.60" cy="5.20" r="2.80" fill="#4a4a4a" opacity=".6"/><circle cx="19.50" cy="3.90" r="2.90" fill="url(#gball)"/></svg><svg class="ic" style="left:753.0px;top:81.0px" width="24" height="24" viewBox="0 0 24 24"><defs><radialGradient id="gball" cx=".38" cy=".32" r=".75"><stop offset="0" stop-color="#ffc4b8"/><stop offset=".3" stop-color="#ff2e16"/><stop offset="1" stop-color="#c80800"/></radialGradient></defs><path d="M5.500 5.700h14.800v13.100h-14.800z" fill="none" stroke="#666" stroke-width="2.600" opacity=".75"/><path d="M4.600 4.700h14.800v13h-14.800z" fill="none" stroke="#cfcfcf" stroke-width="2.900"/><path d="M4.600 4.700h14.800v13h-14.800z" fill="none" stroke="#e4e4e4" stroke-width="1.200"/><circle cx="5.20" cy="18.90" r="2.80" fill="#4a4a4a" opacity=".6"/><circle cx="4.10" cy="17.60" r="2.90" fill="url(#gball)"/><circle cx="21.00" cy="5.55" r="2.80" fill="#4a4a4a" opacity=".6"/><circle cx="19.90" cy="4.25" r="2.90" fill="url(#gball)"/></svg><svg class="ic" style="left:799.0px;top:81.0px" width="24" height="24" viewBox="0 0 24 24"><defs><radialGradient id="gball" cx=".38" cy=".32" r=".75"><stop offset="0" stop-color="#ffc4b8"/><stop offset=".3" stop-color="#ff2e16"/><stop offset="1" stop-color="#c80800"/></radialGradient></defs><path d="M3.500 1v17.500M2 18.500h21" fill="none" stroke="#9a9a9a" stroke-width="1.800"/><path d="M3.500 1v17.500M2 18.500h21" fill="none" stroke="#efefef" stroke-width=".6" stroke-dasharray="2 1.500"/><path d="M3.500 5.250C4.500 13 9 17.500 17.250 18" fill="none" stroke="#666" stroke-width="1.8000000000000003" opacity=".45" transform="translate(.9 1.100)"/><path d="M3.500 5.250C4.500 13 9 17.500 17.250 18" fill="none" stroke="#a2a2a2" stroke-width="2.2"/><path d="M3.500 5.250C4.500 13 9 17.500 17.250 18" fill="none" stroke="#f6f6f6" stroke-width="0.7000000000000002"/><path d="M3.500 18.500l-2 2M3.500 18.500h-2.500" stroke="#9a9a9a" stroke-width="1"/><circle cx="4.60" cy="6.55" r="2.50" fill="#4a4a4a" opacity=".6"/><circle cx="3.50" cy="5.25" r="2.60" fill="url(#gball)"/><circle cx="18.35" cy="19.30" r="2.50" fill="#4a4a4a" opacity=".6"/><circle cx="17.25" cy="18.00" r="2.60" fill="url(#gball)"/></svg><svg class="ic" style="left:835.0px;top:81.0px" width="24" height="24" viewBox="0 0 24 24"><defs><radialGradient id="gball" cx=".38" cy=".32" r=".75"><stop offset="0" stop-color="#ffc4b8"/><stop offset=".3" stop-color="#ff2e16"/><stop offset="1" stop-color="#c80800"/></radialGradient></defs><path d="M2.500 .750L20.600 22" fill="none" stroke="#666" stroke-width="2.0" opacity=".45" transform="translate(.9 1.100)"/><path d="M2.500 .750L20.600 22" fill="none" stroke="#a2a2a2" stroke-width="2.4"/><path d="M2.500 .750L20.600 22" fill="none" stroke="#f6f6f6" stroke-width="0.8999999999999999"/><path d="M15.600 1L6 22" fill="none" stroke="#666" stroke-width="2.0" opacity=".45" transform="translate(.9 1.100)"/><path d="M15.600 1L6 22" fill="none" stroke="#a2a2a2" stroke-width="2.4"/><path d="M15.600 1L6 22" fill="none" stroke="#f6f6f6" stroke-width="0.8999999999999999"/><circle cx="12.10" cy="12.40" r="2.70" fill="#4a4a4a" opacity=".6"/><circle cx="11.00" cy="11.10" r="2.80" fill="url(#gball)"/></svg><svg class="ic" style="left:871.0px;top:81.0px" width="24" height="24" viewBox="0 0 24 24"><defs><radialGradient id="gball" cx=".38" cy=".32" r=".75"><stop offset="0" stop-color="#ffc4b8"/><stop offset=".3" stop-color="#ff2e16"/><stop offset="1" stop-color="#c80800"/></radialGradient></defs><defs><linearGradient id="gext" x1="0" y1="0" x2="1" y2="1"><stop offset="0" stop-color="#d4defc"/><stop offset="1" stop-color="#7f93ee"/></linearGradient></defs>
<path d="M13 22.800l9.500-4.500v-4l-9.500 5z" fill="#3a3a3a" opacity=".7"/>
<path d="M1 14.900L7.750 10.500l12.500 1.250v6.250L12.100 22.400 1 21.100z" fill="#7f93ee" stroke="#4a58cc" stroke-width=".9" stroke-linejoin="round"/><path d="M1 14.900L7.750 10.500l12.500 1.250L12.100 16.100z" fill="url(#gext)" stroke="#5a6cd8" stroke-width=".7"/><path d="M1 14.900l11.100 1.200v6.300L1 21.100z" fill="#a3b4f6"/><path d="M12.100 16.100v6.300" stroke="#5a6cd8" stroke-width=".7"/>
<path d="M15.250 6.300L13.400 10.200" stroke="#2c3ea8" stroke-width="1.500"/><path d="M14 5.800l2.600.6-.6-2z" fill="#2c3ea8"/>
<path d="M8 3.250h14" stroke="#1010b0" stroke-width="1.700" stroke-dasharray="2.600 1.300"/><circle cx="7.75" cy="3.00" r="1.50" fill="url(#gball)"/><circle cx="22.00" cy="3.60" r="1.50" fill="url(#gball)"/></svg><svg class="ic" style="left:906.0px;top:81.0px" width="24" height="24" viewBox="0 0 24 24"><path d="M3.400 1h5.300v20.500h-5.300z" fill="#fdfdfd" stroke="#a9a9a9" stroke-width=".9"/><path d="M3.800 21.800h5.300" stroke="#9a9a9a" stroke-width=".8"/>
<path d="M16 1h5v3.800h-5zM16 6.300h5v4h-5zM16 11.800h5v4h-5zM16 17.300h5v4.200h-5z" fill="#8c8c8c" stroke="#7c7c7c" stroke-width=".6"/>
<path d="M9.500 11l3-2.600v5.200zM15.500 11l-3-2.600v5.200z" fill="#8a8a8a"/><circle cx="12.500" cy="11" r="1.600" fill="#bdbdbd"/></svg><svg class="ic" style="left:954.0px;top:81.0px" width="24" height="24" viewBox="0 0 24 24"><circle cx="12.250" cy="11.400" r="4.200" fill="#a2a2a2" stroke="#8a8a8a" stroke-width=".9"/></svg><svg class="ic" style="left:990.0px;top:81.0px" width="24" height="24" viewBox="0 0 24 24"><path d="M23 4.300C14 1.500 4.800 8 5.300 22" fill="none" stroke="#8a8a8a" stroke-width="4.500"/><path d="M23 4.300C14 1.500 4.800 8 5.300 22" fill="none" stroke="#9b9b9b" stroke-width="3.500"/><circle cx="7.500" cy="6.750" r="3.500" fill="#a6a6a6" stroke="#8a8a8a" stroke-width=".8"/></svg><svg class="ic" style="left:1025.0px;top:81.0px" width="24" height="24" viewBox="0 0 24 24"><path d="M9.900 1h4.300v20.800h-4.300z" fill="#9b9b9b" stroke="#8a8a8a" stroke-width=".8"/></svg><svg class="ic" style="left:1061.0px;top:81.0px" width="24" height="24" viewBox="0 0 24 24"><path d="M1.200 9.700h21.300v4.200h-21.300z" fill="#9b9b9b" stroke="#8a8a8a" stroke-width=".8"/></svg><svg class="ic" style="left:1096.0px;top:81.0px" width="24" height="24" viewBox="0 0 24 24"><path d="M2.750 14.900L15.900 2" stroke="#9b9b9b" stroke-width="4.600"/><path d="M8.400 21L21.500 7.400" stroke="#9b9b9b" stroke-width="4.600"/></svg><svg class="ic" style="left:1132.0px;top:81.0px" width="24" height="24" viewBox="0 0 24 24"><path d="M9.800 1.900h4.500v15.500h-4.500z" fill="#9b9b9b" stroke="#8a8a8a" stroke-width=".6"/><path d="M1.900 17.200h20.300v4.100h-20.300z" fill="#9b9b9b" stroke="#8a8a8a" stroke-width=".6"/></svg><div class="sep" style="left:161px;top:41px;height:24px"></div><div class="sep" style="left:279px;top:41px;height:24px"></div><div class="sep" style="left:400px;top:41px;height:24px"></div><div class="sep" style="left:446px;top:41px;height:24px"></div><div class="sep" style="left:729px;top:41px;height:24px"></div><div class="sep" style="left:775px;top:41px;height:24px"></div><div class="sep" style="left:893px;top:41px;height:24px"></div><div class="sep" style="left:1010px;top:41px;height:24px"></div><div class="sep" style="left:161px;top:81px;height:24px"></div><div class="sep" style="left:788px;top:81px;height:24px"></div><div class="hand" style="left:8px;top:50px"></div><div class="hand" style="left:682px;top:50px"></div><div class="hand" style="left:8px;top:90px"></div><div class="hand" style="left:563px;top:90px"></div><div class="hand" style="left:942px;top:90px"></div><svg class="ic" style="left:326.300px;top:52.300px" width="9" height="6"><path d="M0 0h7.600l-3.800 5.300z" fill="#76736e"/></svg><svg class="ic" style="left:381.300px;top:52.300px" width="9" height="6"><path d="M0 0h7.600l-3.800 5.300z" fill="#cbc9c5"/></svg><div class="combo" style="left:453px;top:41px;width:186px;height:23px"></div><svg class="ic" style="left:458px;top:44px" width="18" height="17" viewBox="0 0 18 17"><path d="M1.500 4.500L8 2.500 16 4v9L9.500 16 1.500 13.500z" fill="#0a0ad8" stroke="#000" stroke-width="1.100" stroke-linejoin="round"/><path d="M1.500 4.500L8 2.500 16 4 9.500 6.500z" fill="#2222f2" stroke="#000" stroke-width=".8"/><path d="M9.500 6.500V16" stroke="#000" stroke-width=".9"/><path d="M9.500 6.500L16 4v9l-6.500 3z" fill="#0000a8"/><path d="M1 1.500l2.500-1.500 5 6-2.500 1.500z" fill="#e8b830" stroke="#a07800" stroke-width=".5"/></svg><div class="tx" style="left:478px;top:45.93px;font-size:14.5px;font-weight:normal;color:#4a4a48;font-family:'Liberation Sans',sans-serif;letter-spacing:0.021px;">Part Design</div><svg class="ic" style="left:626.800px;top:46px" width="8" height="14"><path d="M.400 5.600h6l-3-3.400zM.400 11h6l-3 3.400z" fill="#5a5854"/></svg><svg class="ic" style="left:1185px;top:90px" width="10" height="7" viewBox="0 0 10 7"><path d="M1 .500l3 3-3 3M5.500 .500l3 3-3 3" fill="none" stroke="#111" stroke-width="1.600"/></svg><div class="tx" style="left:6.4px;top:117.73px;font-size:14.5px;font-weight:normal;color:#4a4a48;font-family:'Liberation Sans',sans-serif;letter-spacing:0.005px;">Combo View</div><svg class="ic" style="left:350px;top:118px" width="30" height="13" viewBox="0 0 30 13"><rect x="1.500" y="1.500" width="10" height="10" rx="1.500" fill="#f6f5f4" stroke="#6e6c68" stroke-width="1"/><rect x="5.500" y="3.500" width="4" height="4" fill="none" stroke="#6e6c68" stroke-width=".9"/><rect x="3.500" y="5.500" width="4" height="4" fill="#f6f5f4" stroke="#6e6c68" stroke-width=".9"/><rect x="17.800" y="1.500" width="10" height="10" rx="1.500" fill="#f6f5f4" stroke="#6e6c68" stroke-width="1"/><path d="M20.200 3.900l5.200 5.200M25.400 3.900l-5.200 5.200" stroke="#504e4a" stroke-width="1.700"/></svg><div class="abs" style="left:5px;top:165.5px;width:376px;height:538px;border:1px solid #bdb8b1;border-radius:3px;background:#f2f1f0"></div><div class="abs" style="left:6.5px;top:167px;width:356.2px;height:535.5px;background:#c9c6c3"></div><div class="abs" style="left:5px;top:140.5px;width:63px;height:26px;border:1px solid #bdb8b1;border-bottom:none;border-radius:4px 4px 0 0;background:linear-gradient(#f0efed,#e6e4e1)"></div><div class="abs" style="left:67.5px;top:137px;width:49.5px;height:30px;border:1px solid #bdb8b1;border-bottom:none;border-radius:4px 4px 0 0;background:linear-gradient(#fbfbfa,#f4f3f2)"></div><div class="tx" style="left:12.2px;top:145.03px;font-size:14.5px;font-weight:normal;color:#4a4a48;font-family:'Liberation Sans',sans-serif;letter-spacing:0.237px;">Project</div><div class="tx" style="left:75px;top:144.33px;font-size:14.5px;font-weight:normal;color:#4a4a48;font-family:'Liberation Sans',sans-serif;letter-spacing:-0.496px;">Tasks</div><div class="btn" style="left:100px;top:187px;width:80.500px;height:23.500px"></div><div class="btn" style="left:189.400px;top:187px;width:81px;height:23.500px"></div><div class="tx" style="left:125px;top:192.03px;font-size:14.5px;font-weight:normal;color:#4a4a48;font-family:'Liberation Sans',sans-serif;letter-spacing:0.043px;">Help</div><div class="tx ul" style="left:212.7px;top:192.03px;font-size:14.5px;font-weight:normal;color:#4a4a48;font-family:'Liberation Sans',sans-serif;letter-spacing:-0.416px;text-decoration:none">Close</div><div class="hdr" style="left:15px;top:228.4px;width:340px;height:24.500px"></div><svg class="ic" style="left:20px;top:229.9px" width="20" height="22" viewBox="0 0 20 22"><defs><linearGradient id="gdoc" x1="0" y1="0" x2="1" y2="1"><stop offset="0" stop-color="#fcfcfc"/><stop offset="1" stop-color="#d9d9d9"/></linearGradient><radialGradient id="gsun"><stop offset="0" stop-color="#fff89a"/><stop offset=".6" stop-color="#ffe83a"/><stop offset="1" stop-color="#ffe83a" stop-opacity="0"/></radialGradient></defs><path d="M1.500 2.500h15.500v18h-15.500z" fill="url(#gdoc)" stroke="#9a8f88" stroke-width=".9"/><circle cx="15.300" cy="5.200" r="4.200" fill="url(#gsun)"/></svg><div class="tx" style="left:44.4px;top:234.35px;font-size:14px;font-weight:bold;color:#ffffff;font-family:'Liberation Sans',sans-serif;letter-spacing:-0.027px;">Solver messages</div><svg class="ic" style="left:336px;top:232.9px" width="16" height="16" viewBox="0 0 16 16"><circle cx="7.600" cy="8" r="7" fill="#fdf6f2"/><path d="M4.300 7.300L7.600 4l3.300 3.300M4.300 11.300L7.600 8l3.300 3.300" fill="none" stroke="#e8703f" stroke-width="1.500"/></svg><div class="abs" style="left:15px;top:252.9px;width:340px;height:60.7px;background:#f2f1f0"></div><div class="tx" style="left:27.6px;top:266.61px;font-size:13px;font-weight:normal;color:#4a4a48;font-family:'Liberation Serif',serif;letter-spacing:-0.053px;">Under-constrained sketch with 8 degrees of freedom</div><div class="tx" style="left:27.6px;top:287.01px;font-size:13px;font-weight:normal;color:#4a4a48;font-family:'Liberation Serif',serif;letter-spacing:-0.139px;">Solved in 0 sec</div><div class="hdr" style="left:15px;top:322px;width:340px;height:24.500px"></div><svg class="ic" style="left:20px;top:323.5px" width="20" height="22" viewBox="0 0 20 22"><defs><linearGradient id="gdoc" x1="0" y1="0" x2="1" y2="1"><stop offset="0" stop-color="#fcfcfc"/><stop offset="1" stop-color="#d9d9d9"/></linearGradient><radialGradient id="gsun"><stop offset="0" stop-color="#fff89a"/><stop offset=".6" stop-color="#ffe83a"/><stop offset="1" stop-color="#ffe83a" stop-opacity="0"/></radialGradient></defs><path d="M1.500 2.500h15.500v18h-15.500z" fill="url(#gdoc)" stroke="#9a8f88" stroke-width=".9"/><circle cx="15.300" cy="5.200" r="4.200" fill="url(#gsun)"/></svg><div class="tx" style="left:44.4px;top:327.95px;font-size:14px;font-weight:bold;color:#ffffff;font-family:'Liberation Sans',sans-serif;letter-spacing:0.188px;">Edit controls</div><svg class="ic" style="left:336px;top:326.5px" width="16" height="16" viewBox="0 0 16 16"><circle cx="7.600" cy="8" r="7" fill="#fdf6f2"/><path d="M4.300 7.300L7.600 4l3.300 3.300M4.300 11.300L7.600 8l3.300 3.300" fill="none" stroke="#e8703f" stroke-width="1.500"/></svg><div class="abs" style="left:15px;top:346.5px;width:340px;height:107.1px;background:#f2f1f0"></div><div class="tx" style="left:28px;top:366.03px;font-size:14.5px;font-weight:normal;color:#4a4a48;font-family:'Liberation Sans',sans-serif;letter-spacing:-0.285px;">Grid size:</div><div class="combo" style="left:189.300px;top:360.500px;width:151.400px;height:24.300px"></div><div class="tx" style="left:195px;top:366.03px;font-size:14.5px;font-weight:normal;color:#4a4a48;font-family:'Liberation Sans',sans-serif;letter-spacing:-0.166px;">10 mm</div><svg class="ic" style="left:328px;top:367px" width="8" height="15"><path d="M.700 5.200h5.400l-2.700-3.200zM.700 11h5.400l-2.700 3.200z" fill="#66645f"/></svg><div class="abs" style="left:30.2px;top:396px;width:14.2px;height:14px;border:1px solid #b9b4ad;border-radius:3px;background:#fff;box-shadow:0 0 0 .5px #dcd9d5"></div><div class="tx" style="left:52.1px;top:396.03px;font-size:14.5px;font-weight:normal;color:#4a4a48;font-family:'Liberation Sans',sans-serif;letter-spacing:-0.286px;">Grid snap</div><div class="abs" style="left:30.2px;top:423.3px;width:14.2px;height:14px;border:1px solid #cf6336;border-radius:3px;background:linear-gradient(#f38b62,#ea6832)"></div><svg class="ic" style="left:30px;top:422px" width="16" height="16" viewBox="0 0 16 16"><path d="M3.300 7.800l3.700 3.800 8.500-9.400" fill="none" stroke="#6a3019" stroke-width="2.200"/></svg><div class="tx" style="left:52.1px;top:423.03px;font-size:14.5px;font-weight:normal;color:#4a4a48;font-family:'Liberation Sans',sans-serif;letter-spacing:0.207px;">Auto constraints</div><div class="hdr" style="left:15px;top:462px;width:340px;height:24.500px"></div><svg class="ic" style="left:20px;top:463.5px" width="20" height="22" viewBox="0 0 20 22"><defs><linearGradient id="gdoc" x1="0" y1="0" x2="1" y2="1"><stop offset="0" stop-color="#fcfcfc"/><stop offset="1" stop-color="#d9d9d9"/></linearGradient><radialGradient id="gsun"><stop offset="0" stop-color="#fff89a"/><stop offset=".6" stop-color="#ffe83a"/><stop offset="1" stop-color="#ffe83a" stop-opacity="0"/></radialGradient></defs><path d="M1.500 2.500h15.500v18h-15.500z" fill="url(#gdoc)" stroke="#9a8f88" stroke-width=".9"/><circle cx="15.300" cy="5.200" r="4.200" fill="url(#gsun)"/></svg><div class="tx" style="left:44.4px;top:467.95px;font-size:14px;font-weight:bold;color:#ffffff;font-family:'Liberation Sans',sans-serif;letter-spacing:0.109px;">Constraints</div><svg class="ic" style="left:336px;top:466.5px" width="16" height="16" viewBox="0 0 16 16"><circle cx="7.600" cy="8" r="7" fill="#fdf6f2"/><path d="M4.300 7.300L7.600 4l3.300 3.300M4.300 11.300L7.600 8l3.300 3.300" fill="none" stroke="#e8703f" stroke-width="1.500"/></svg><div class="abs" style="left:15px;top:486.5px;width:340px;height:216px;background:#f2f1f0"></div><div class="tx" style="left:28px;top:506.03px;font-size:14.5px;font-weight:normal;color:#4a4a48;font-family:'Liberation Sans',sans-serif;letter-spacing:0.15px;">Filter:</div><div class="combo" style="left:189.300px;top:500.400px;width:151.400px;height:24.300px"></div><div class="tx" style="left:194.4px;top:506.03px;font-size:14.5px;font-weight:normal;color:#4a4a48;font-family:'Liberation Sans',sans-serif;letter-spacing:0.261px;">Normal</div><svg class="ic" style="left:328px;top:507px" width="8" height="15"><path d="M.700 5.200h5.400l-2.700-3.200zM.700 11h5.400l-2.700 3.200z" fill="#66645f"/></svg><div class="abs" style="left:27.6px;top:532px;width:298.4px;height:171px;border:1px solid #b3aea6;border-bottom:none;background:#fff"></div><div class="abs" style="left:28px;top:533px;width:297px;height:169.500px;overflow:hidden"><svg class="ic" style="left:4px;top:9.200000000000045px" width="24" height="8" viewBox="0 0 24 8"><rect x=".700" y="1.300" width="21.500" height="5.200" rx="1" fill="#a41600"/><rect x="1.200" y="1.800" width="20.500" height="3.600" rx=".6" fill="#f22200"/></svg><div class="tx" style="left:33.2px;top:6.73px;font-size:14.5px;font-weight:normal;color:#4a4a48;font-family:'Liberation Sans',sans-serif;letter-spacing:0.104px;">Constraint1</div><svg class="ic" style="left:4px;top:34.80000000000007px" width="24" height="8" viewBox="0 0 24 8"><rect x=".700" y="1.300" width="21.500" height="5.200" rx="1" fill="#a41600"/><rect x="1.200" y="1.800" width="20.500" height="3.600" rx=".6" fill="#f22200"/></svg><div class="tx" style="left:33.2px;top:32.33px;font-size:14.5px;font-weight:normal;color:#4a4a48;font-family:'Liberation Sans',sans-serif;letter-spacing:0.104px;">Constraint4</div><svg class="ic" style="left:12px;top:52.90000000000009px" width="8" height="23" viewBox="0 0 8 23"><rect x=".600" y=".500" width="4.700" height="21.300" rx=".9" fill="#a41600"/><rect x="1" y=".900" width="3.500" height="20.300" rx=".6" fill="#f22200"/></svg><div class="tx" style="left:33.2px;top:57.93px;font-size:14.5px;font-weight:normal;color:#4a4a48;font-family:'Liberation Sans',sans-serif;letter-spacing:0.104px;">Constraint6</div><svg class="ic" style="left:4px;top:86.0px" width="24" height="8" viewBox="0 0 24 8"><rect x=".700" y="1.300" width="21.500" height="5.200" rx="1" fill="#a41600"/><rect x="1.200" y="1.800" width="20.500" height="3.600" rx=".6" fill="#f22200"/></svg><div class="tx" style="left:33.2px;top:83.53px;font-size:14.5px;font-weight:normal;color:#4a4a48;font-family:'Liberation Sans',sans-serif;letter-spacing:0.104px;">Constraint8</div><svg class="ic" style="left:4px;top:104.10000000000002px" width="24" height="24" viewBox="0 0 24 24"><path d="M21.700 3.600C13 .500 4 7 4.800 20.600" fill="none" stroke="#a81600" stroke-width="4.100"/><path d="M21.500 3.300C12.800 .200 3.800 6.700 4.600 20.300" fill="none" stroke="#f22000" stroke-width="3.100"/><circle cx="7" cy="5.800" r="3.300" fill="#ff4c00" stroke="#d42400" stroke-width=".8"/></svg><div class="tx" style="left:33.2px;top:109.13px;font-size:14.5px;font-weight:normal;color:#4a4a48;font-family:'Liberation Sans',sans-serif;letter-spacing:0.19px;">Constraint10</div><svg class="ic" style="left:12px;top:129.70000000000005px" width="8" height="23" viewBox="0 0 8 23"><rect x=".600" y=".500" width="4.700" height="21.300" rx=".9" fill="#a41600"/><rect x="1" y=".900" width="3.500" height="20.300" rx=".6" fill="#f22200"/></svg><div class="tx" style="left:33.2px;top:134.73px;font-size:14.5px;font-weight:normal;color:#4a4a48;font-family:'Liberation Sans',sans-serif;letter-spacing:0.155px;">Constraint11</div><svg class="ic" style="left:4px;top:155.30000000000007px" width="24" height="24" viewBox="0 0 24 24"><path d="M21.700 3.600C13 .500 4 7 4.800 20.600" fill="none" stroke="#a81600" stroke-width="4.100"/><path d="M21.500 3.300C12.800 .200 3.800 6.700 4.600 20.300" fill="none" stroke="#f22000" stroke-width="3.100"/><circle cx="7" cy="5.800" r="3.300" fill="#ff4c00" stroke="#d42400" stroke-width=".8"/></svg><div class="tx" style="left:33.2px;top:160.33px;font-size:14.5px;font-weight:normal;color:#4a4a48;font-family:'Liberation Sans',sans-serif;letter-spacing:0.19px;">Constraint13</div></div><div class="abs" style="left:0;top:0;width:1200px;height:702.5px;overflow:hidden"><div class="abs" style="left:329px;top:532px;width:12.5px;height:190px;border:1px solid #c4bfb8;border-radius:6.25px;background:linear-gradient(90deg,#e2e0dd,#eeedeb)"></div><div class="abs" style="left:329px;top:544.5px;width:12.5px;height:142.5px;border:1px solid #aaa49c;border-radius:6.25px;background:linear-gradient(90deg,#fefefe,#e9e8e6)"></div><svg class="ic" style="left:332.25px;top:538px" width="6" height="4"><path d="M.500 3.500h5l-2.500-3z" fill="#bab6b0"/></svg><div class="abs" style="left:333.25px;top:612px;width:4px;height:1px;background:#c6c3be;box-shadow:0 1px 0 #fbfbfa"></div><div class="abs" style="left:333.25px;top:615px;width:4px;height:1px;background:#c6c3be;box-shadow:0 1px 0 #fbfbfa"></div><div class="abs" style="left:333.25px;top:618px;width:4px;height:1px;background:#c6c3be;box-shadow:0 1px 0 #fbfbfa"></div></div><div class="abs" style="left:366.5px;top:167px;width:12.5px;height:535.5px;border:1px solid #c4bfb8;border-radius:6.25px;background:linear-gradient(90deg,#e2e0dd,#eeedeb)"></div><div class="abs" style="left:366.5px;top:180px;width:12.5px;height:473.5px;border:1px solid #aaa49c;border-radius:6.25px;background:linear-gradient(90deg,#fefefe,#e9e8e6)"></div><svg class="ic" style="left:369.75px;top:173px" width="6" height="4"><path d="M.500 3.500h5l-2.500-3z" fill="#a9a59f"/></svg><div class="abs" style="left:370.75px;top:413.5px;width:4px;height:1px;background:#c6c3be;box-shadow:0 1px 0 #fbfbfa"></div><div class="abs" style="left:370.75px;top:416.5px;width:4px;height:1px;background:#c6c3be;box-shadow:0 1px 0 #fbfbfa"></div><div class="abs" style="left:370.75px;top:419.5px;width:4px;height:1px;background:#c6c3be;box-shadow:0 1px 0 #fbfbfa"></div><svg class="ic" style="left:369.700px;top:693.500px" width="7" height="4"><path d="M0 0h6l-3 3.600z" fill="#75726d"/></svg><div class="abs" style="left:382.3px;top:405.7px;width:3.7px;height:1px;background:#d6d4d0;box-shadow:0 1px 0 #fbfbfa"></div><div class="abs" style="left:382.3px;top:408.7px;width:3.7px;height:1px;background:#d6d4d0;box-shadow:0 1px 0 #fbfbfa"></div><div class="abs" style="left:382.3px;top:411.7px;width:3.7px;height:1px;background:#d6d4d0;box-shadow:0 1px 0 #fbfbfa"></div><svg class="ic" style="left:387px;top:112px;overflow:hidden" width="810" height="561" viewBox="0 0 810 561"><defs><linearGradient id="gbg" x1="0" y1="0" x2="0" y2="1"><stop offset="0" stop-color="#333365"/><stop offset="1" stop-color="#9191aa"/></linearGradient></defs><style>.gr{stroke:#cdccca;stroke-width:1;stroke-dasharray:4.100 3.900;fill:none;opacity:.9}</style><rect width="810" height="561" fill="url(#gbg)"/><path d="M26.5 207.10000000000002V423" class="gr"/><path d="M81.5 207.10000000000002V423" class="gr"/><path d="M136.5 207.10000000000002V423" class="gr"/><path d="M191.5 207.10000000000002V423" class="gr"/><path d="M246.5 207.10000000000002V423" class="gr"/><path d="M301.5 207.10000000000002V423" class="gr"/><path d="M356.5 207.10000000000002V423" class="gr"/><path d="M411.5 207.10000000000002V423" class="gr"/><path d="M466.5 207.10000000000002V423" class="gr"/><path d="M521.5 207.10000000000002V423" class="gr"/><path d="M576.5 207.10000000000002V423" class="gr"/><path d="M631.5 207.10000000000002V423" class="gr"/><path d="M686.5 207.10000000000002V423" class="gr"/><path d="M741.5 207.10000000000002V423" class="gr"/><path d="M796.5 207.10000000000002V423" class="gr"/><path d="M26.30000000000001 258.5H810" class="gr"/><path d="M26.30000000000001 313.5H810" class="gr"/><path d="M26.30000000000001 368.5H810" class="gr"/><path d="M26.30000000000001 423.5H810" class="gr"/><path d="M82 368.3H810" stroke="#dc6462" stroke-width="2.100"/><path d="M192.29999999999995 258V383.5" stroke="#62cf6a" stroke-width="2"/><path d="M192.29999999999995 223.8l3 16.500l-2.300 3.500v14h-1.400v-14l-2.300-3.500z" fill="#20207c"/><path d="M248.7 263.6L631.8 263.6L630.4 298.2L561.3 298.2L561.3 341.7L630.4 341.7L630.4 368.1L248.7 368.1z" fill="none" stroke="#ffffff" stroke-width="3.100" stroke-linejoin="round"/><path d="M316.6 364.8l17 2.800h3.400v1h-3.400l-17 2.800z" fill="#782222"/><circle cx="248.7" cy="263.6" r="3.500" fill="#ff2a0c"/><circle cx="631.8" cy="263.6" r="3.500" fill="#ff2a0c"/><circle cx="630.4" cy="298.2" r="3.500" fill="#ff2a0c"/><circle cx="561.3" cy="298.2" r="3.500" fill="#ff2a0c"/><circle cx="561.3" cy="341.7" r="3.500" fill="#ff2a0c"/><circle cx="630.4" cy="341.7" r="3.500" fill="#ff2a0c"/><circle cx="630.4" cy="368.1" r="3.500" fill="#ff2a0c"/><circle cx="248.7" cy="368.1" r="3.500" fill="#ff2a0c"/><circle cx="192.2" cy="368" r="3.500" fill="#ff2a0c"/><rect x="432.8" y="248.2" width="13.8" height="4.1" fill="#ff2200"/><rect x="232.4" y="309" width="3.5" height="14" fill="#ff2200"/><rect x="572.2" y="313.3" width="3.6" height="13.5" fill="#ff2200"/><rect x="588.3" y="310" width="14.0" height="4" fill="#ff2200"/><rect x="588.3" y="326" width="14.0" height="4" fill="#ff2200"/><rect x="641.3" y="348" width="3.5" height="13.4" fill="#ff2200"/><path d="M243.5 363.5c-2.500-6 2-11.500 11.500-10.500" fill="none" stroke="#ff2200" stroke-width="3.200"/><path d="M624 363.8c-2.500-6 2-11.500 11.500-10.500" fill="none" stroke="#ff2200" stroke-width="3.200"/><path d="M782.2 514.3V533.3" stroke="#1a1a8c" stroke-width="2"/><path d="M780 519h4.400" stroke="#1a1a8c" stroke-width="1.600"/><path d="M782.2 533.2H801" stroke="#a01818" stroke-width="2"/><path d="M796.4000000000001 531v4.400" stroke="#a01818" stroke-width="1.600"/><circle cx="781.8" cy="533.8" r="1.300" fill="#22aa22"/><text x="784.5999999999999" y="514" font-family="Liberation Sans,sans-serif" font-size="8.500" fill="#111">Z</text><text x="784.5999999999999" y="532.7" font-family="Liberation Sans,sans-serif" font-size="8.500" fill="#111">Y</text><text x="803.5" y="532.7" font-family="Liberation Sans,sans-serif" font-size="8.500" fill="#111">X</text></svg><div class="abs" style="left:386.5px;top:672.5px;width:109.5px;height:29px;border:1px solid #c4bfb8;border-top:none;border-radius:0 0 5px 5px;background:linear-gradient(#e4e2df,#f0efed 40%,#f2f1f0)"></div><div class="abs" style="left:496px;top:672.5px;width:153px;height:32.3px;border:1px solid #c4bfb8;border-top:none;border-radius:0 0 5px 5px;background:linear-gradient(#f4f3f2,#fbfbfa)"></div><div class="tx" style="left:395.5px;top:680.93px;font-size:14.5px;font-weight:normal;color:#4a4a48;font-family:'Liberation Sans',sans-serif;letter-spacing:0.008px;">Start page</div><div class="tx" style="left:527px;top:681.73px;font-size:14.5px;font-weight:normal;color:#4a4a48;font-family:'Liberation Sans',sans-serif;letter-spacing:-0.056px;">Unnamed : 1*</div><svg class="ic" style="left:471.5px;top:682.2px" width="13" height="13" viewBox="0 0 13 13"><path d="M2.300 2.300l8.400 8.400M10.700 2.300l-8.400 8.400" stroke="#67655f" stroke-width="3.500" stroke-linejoin="round"/></svg><svg class="ic" style="left:624.5px;top:683px" width="13" height="13" viewBox="0 0 13 13"><path d="M2.300 2.300l8.400 8.400M10.700 2.300l-8.400 8.400" stroke="#67655f" stroke-width="3.500" stroke-linejoin="round"/></svg><svg class="ic" style="left:503px;top:680.500px" width="15" height="15" viewBox="0 0 15 15"><defs><linearGradient id="gF" x1="0" y1="0" x2="1" y2="0"><stop offset="0" stop-color="#ff5a1a"/><stop offset="1" stop-color="#d81410"/></linearGradient></defs><path d="M.300 1h7.400v2.700h-4.400v2.300h3.200v2.500h-3.200v4.400h-3z" fill="url(#gF)"/><circle cx="9.200" cy="8.500" r="4.200" fill="none" stroke="#1c3f9c" stroke-width="1.800" stroke-dasharray="1.750 1.550"/><circle cx="9.200" cy="8.500" r="3.600" fill="#1c3f9c"/><circle cx="9.200" cy="8.500" r="1.400" fill="#f6f5f4"/></svg>
</body></html>
